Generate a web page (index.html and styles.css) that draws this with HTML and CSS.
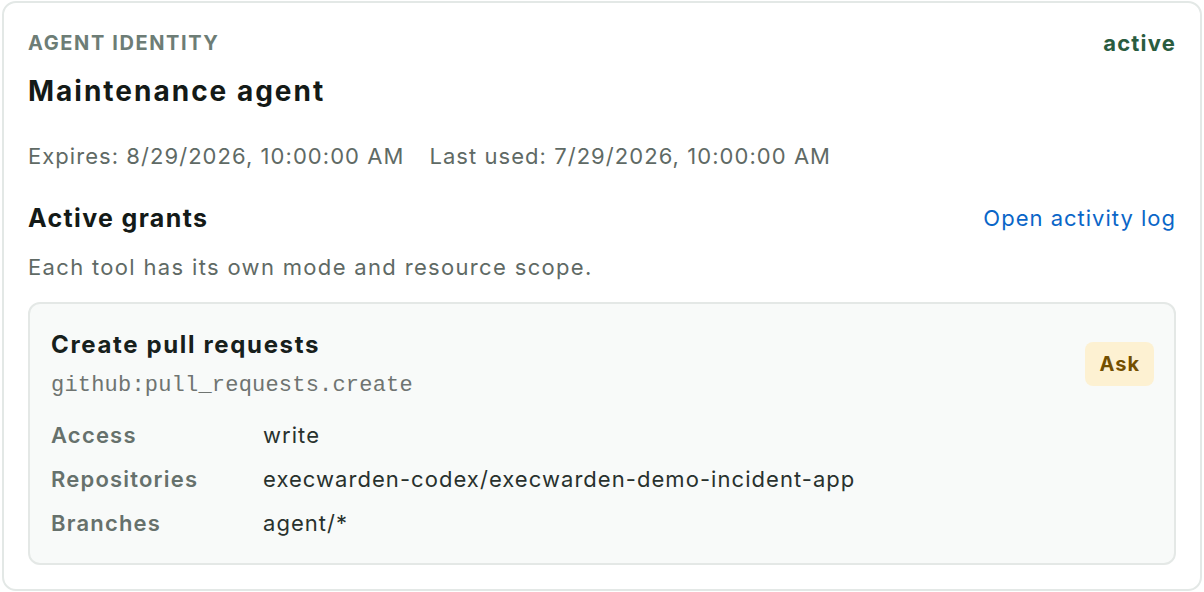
FILE: index.html
```html
<!DOCTYPE html>
<html lang="en">
<head>
    <meta charset="UTF-8">
    <meta name="viewport" content="width=device-width, initial-scale=1.0">
    <title>Agent identity</title>
    <link rel="stylesheet" href="styles.css">
</head>
<body>
    <section class="identity-card">
        <div class="card-head">
            <div class="eyebrow">Agent identity</div>
            <div class="status">active</div>
        </div>
        <h1 class="agent-name">Maintenance agent</h1>
        <div class="meta">
            <span>Expires: 8/29/2026, 10:00:00 AM</span>
            <span>Last used: 7/29/2026, 10:00:00 AM</span>
        </div>

        <div class="grants-head">
            <h2>Active grants</h2>
            <a class="log-link" href="#">Open activity log</a>
        </div>
        <p class="hint">Each tool has its own mode and resource scope.</p>

        <div class="grant">
            <div class="grant-top">
                <div>
                    <h3>Create pull requests</h3>
                    <code class="tool-id">github:pull_requests.create</code>
                </div>
                <span class="mode">Ask</span>
            </div>
            <dl class="scope">
                <dt>Access</dt>
                <dd>write</dd>
                <dt>Repositories</dt>
                <dd>execwarden-codex/execwarden-demo-incident-app</dd>
                <dt>Branches</dt>
                <dd>agent/*</dd>
            </dl>
        </div>
    </section>
</body>
</html>
```

FILE: styles.css
```css
body, html {
    margin: 0;
    padding: 0;
    background-color: white;
    font-family: Inter, "Noto Sans", sans-serif;
    color: #141a17;
}
body {
    padding: 1px 2px;
}
.identity-card {
    border: 2px solid #e3e8e6;
    border-radius: 14px;
    padding: 24px;
}
.card-head {
    display: flex;
    justify-content: space-between;
    align-items: center;
    height: 32px;
}
.eyebrow {
    text-transform: uppercase;
    font-size: 20px;
    font-weight: 700;
    letter-spacing: 1.6px;
    color: #6d7d76;
}
.status {
    font-size: 22px;
    font-weight: 700;
    letter-spacing: 1.2px;
    color: #2a5c3f;
}
.agent-name {
    margin: 14px 0 0;
    font-size: 28px;
    line-height: 36px;
    font-weight: 700;
    letter-spacing: 2px;
}
.meta {
    margin-top: 33px;
    display: flex;
    gap: 25px;
    font-size: 22px;
    line-height: 28px;
    letter-spacing: 1.05px;
    color: #5f6a65;
}
.grants-head {
    margin-top: 32px;
    display: flex;
    justify-content: space-between;
    align-items: center;
    height: 32px;
}
.grants-head h2 {
    margin: 0;
    font-size: 25px;
    font-weight: 700;
    letter-spacing: 1.35px;
}
.log-link {
    font-size: 22px;
    letter-spacing: 1px;
    color: #0a66c8;
    text-decoration: none;
}
.hint {
    margin: 19px 0 0;
    font-size: 22px;
    line-height: 28px;
    letter-spacing: 1.33px;
    color: #5f6a65;
}
.grant {
    margin-top: 21px;
    border: 2px solid #e4e8e6;
    border-radius: 12px;
    background-color: #f8faf9;
    padding: 20px 20px 18px 21px;
}
.grant-top {
    display: flex;
    justify-content: space-between;
    align-items: center;
}
.grant-top h3 {
    margin: 0;
    font-size: 24px;
    line-height: 42px;
    font-weight: 700;
    letter-spacing: 1.65px;
    color: #17201c;
}
.tool-id {
    display: block;
    margin-top: 3px;
    font-family: "Liberation Mono", monospace;
    font-size: 22px;
    line-height: 34px;
    letter-spacing: 0.2px;
    color: #6f7471;
}
.mode {
    background-color: #fdf1d2;
    color: #734f00;
    font-size: 20px;
    font-weight: 700;
    letter-spacing: 1px;
    line-height: 44px;
    padding: 0 14px;
    border-radius: 8px;
}
.scope {
    margin: 10px 0 0;
    display: grid;
    grid-template-columns: 212px 1fr;
    grid-auto-rows: 44px;
    align-items: center;
    font-size: 22px;
    letter-spacing: 1.05px;
}
.scope dt {
    font-weight: 600;
    letter-spacing: 1.2px;
    color: #66716c;
}
.scope dd {
    margin: 0;
    color: #28312d;
}
```
